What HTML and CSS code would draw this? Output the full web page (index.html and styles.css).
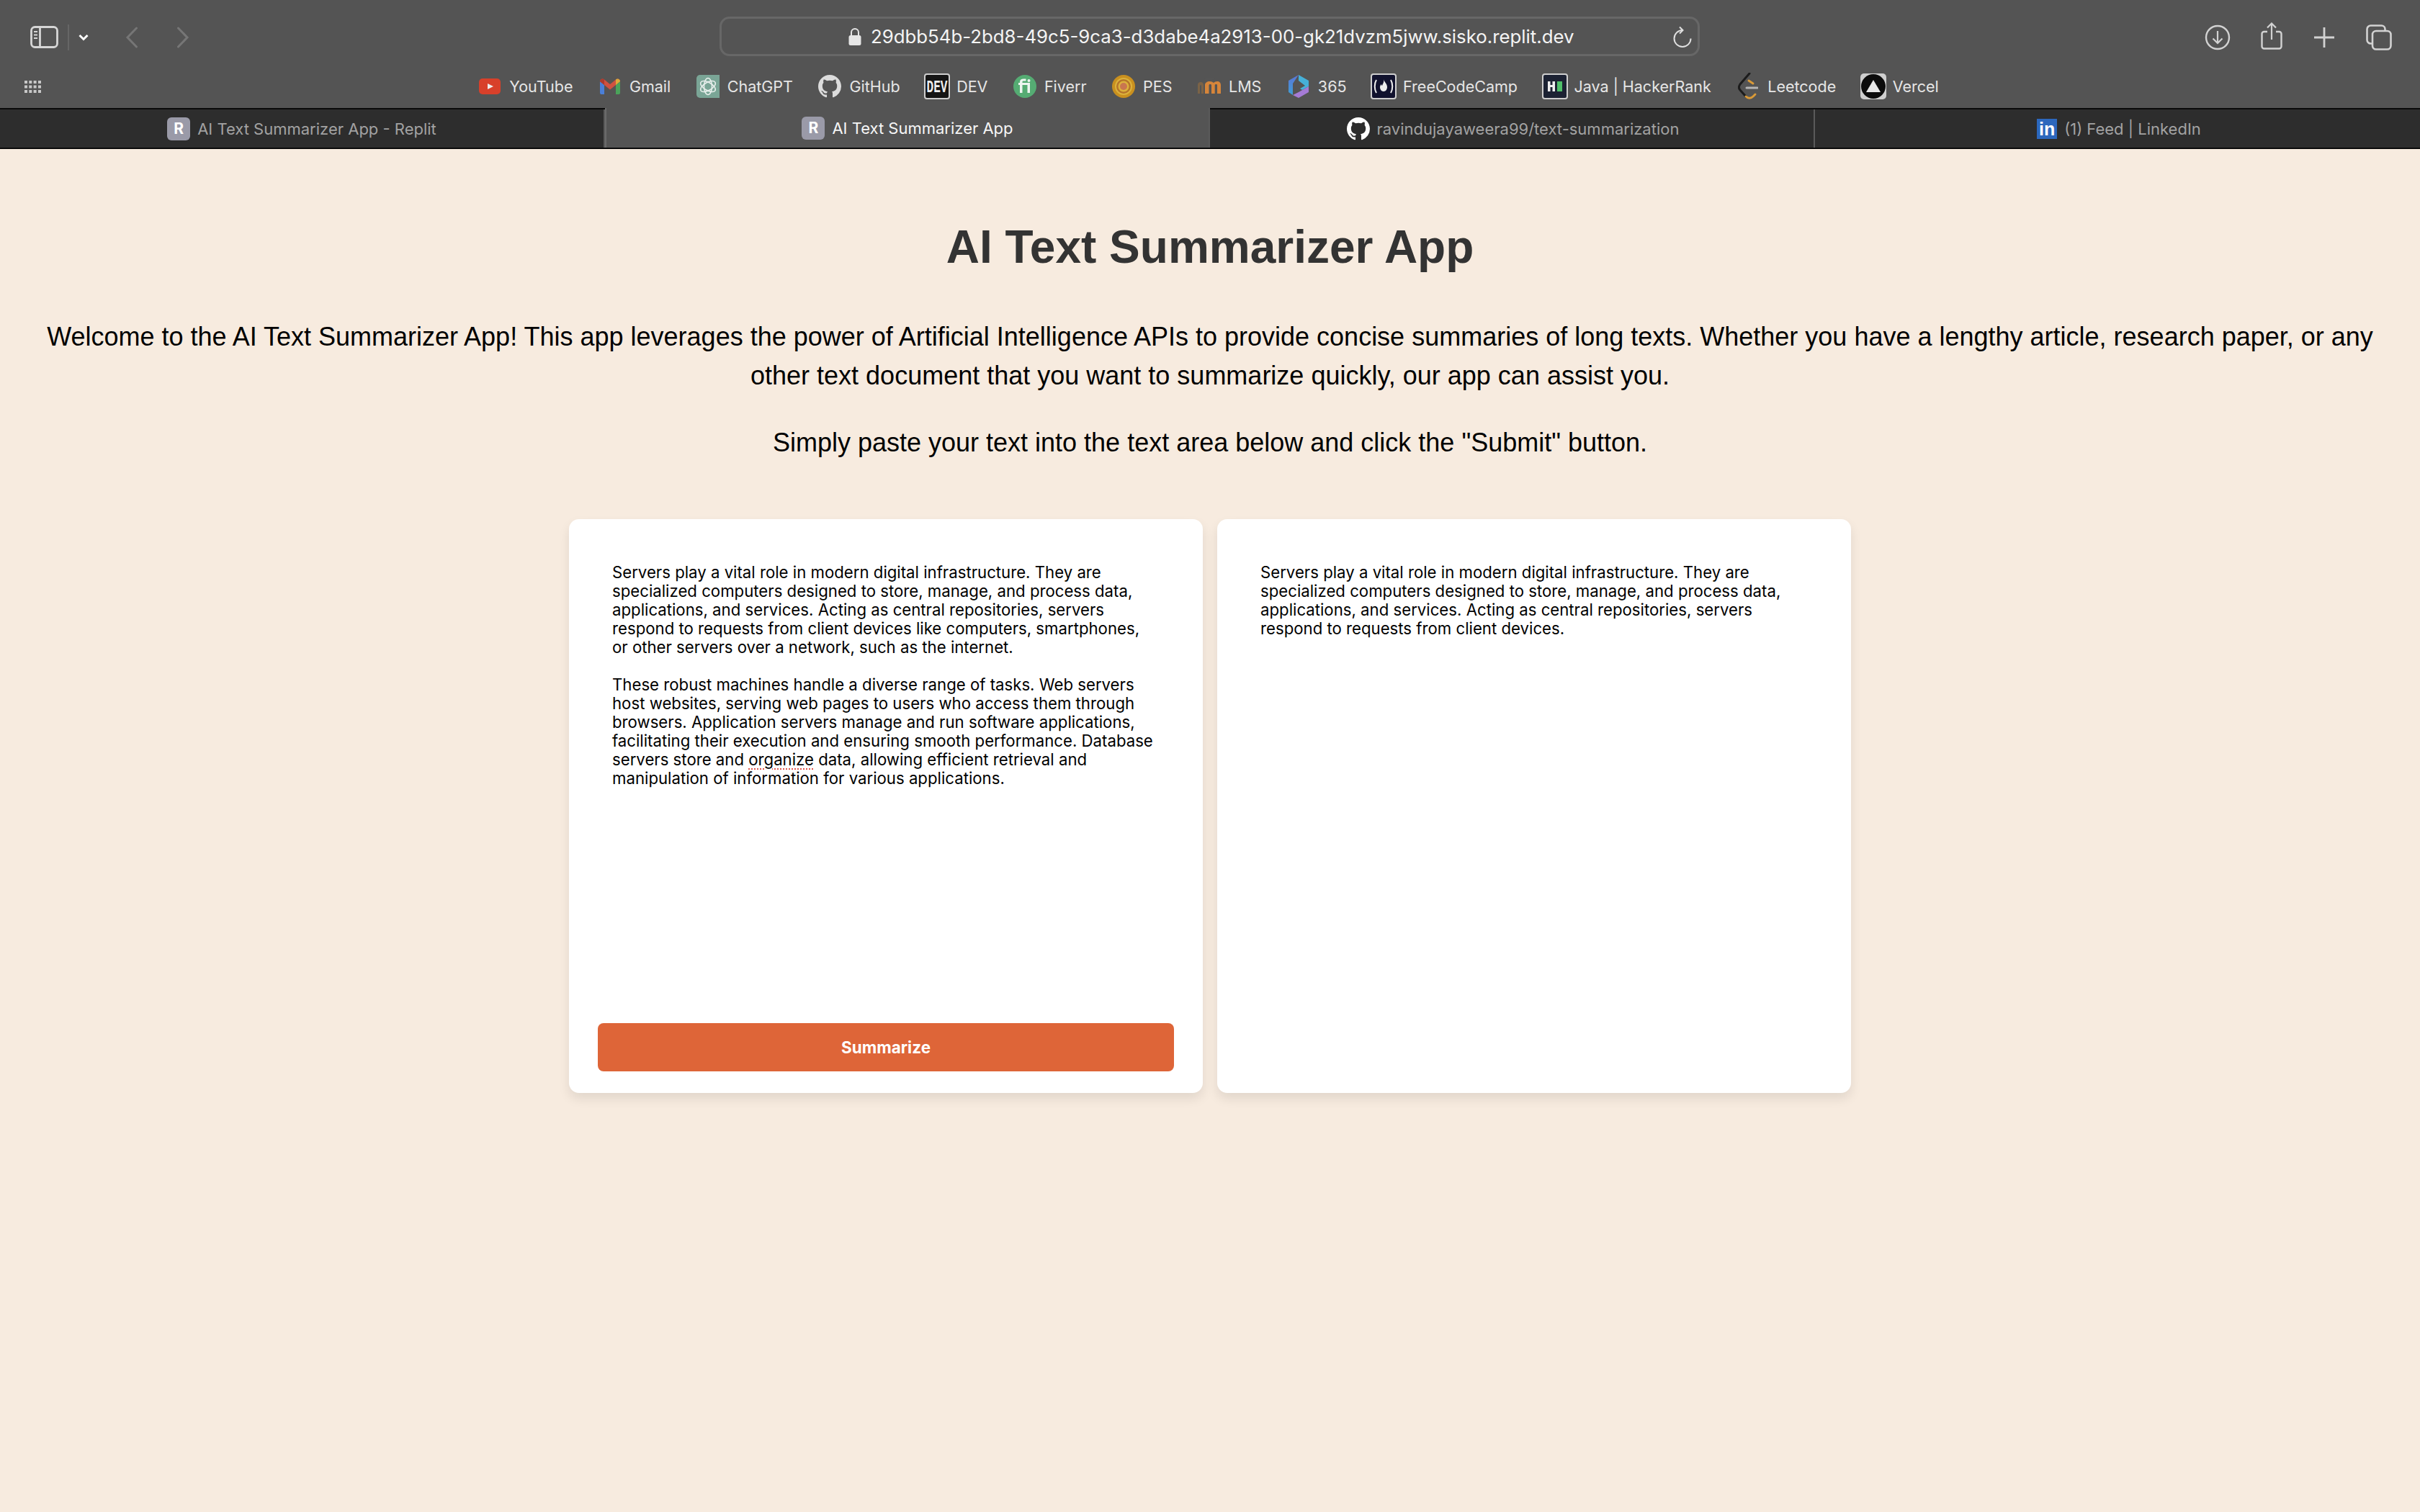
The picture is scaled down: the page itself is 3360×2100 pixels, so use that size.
FILE: index.html
```html
<!DOCTYPE html>
<html lang="en">
<head>
<meta charset="utf-8">
<title>AI Text Summarizer App</title>
<link rel="stylesheet" href="styles.css">
</head>
<body>
<header class="chrome">
  <div class="toolbar">
    <div class="tb-left">
      <svg class="i-side" viewBox="0 0 39 31"><rect x="1.500" y="1.500" width="36" height="28" rx="5" fill="none" stroke="#d6d6d6" stroke-width="2.800"/><path d="M13.500 2v27" stroke="#d6d6d6" stroke-width="2.800"/><path d="M5 8h5M5 12.500h5M5 17h5" stroke="#d6d6d6" stroke-width="1.800"/></svg>
      <span class="tb-sep"></span>
      <svg class="i-chev" viewBox="0 0 14 10"><path d="M1.500 2 7 7.500 12.500 2" fill="none" stroke="#fff" stroke-width="3"/></svg>
      <svg class="i-nav" viewBox="0 0 18 30"><path d="M15.500 2 3 15l12.500 13" fill="none" stroke="#767676" stroke-width="3" stroke-linecap="round"/></svg>
      <svg class="i-nav" viewBox="0 0 18 30"><path d="M2.500 2 15 15 2.500 28" fill="none" stroke="#767676" stroke-width="3" stroke-linecap="round"/></svg>
    </div>
    <div class="urlbar">
      <svg class="i-lock" viewBox="0 0 20 26"><path d="M5 12V7a5 5 0 0 1 10 0v5" fill="none" stroke="#e6e6e6" stroke-width="2"/><rect x="1.500" y="11" width="17" height="14" rx="2.500" fill="#e6e6e6"/></svg>
      <span class="url">29dbb54b-2bd8-49c5-9ca3-d3dabe4a2913-00-gk21dvzm5jww.sisko.replit.dev</span>
      <svg class="i-reload" viewBox="0 0 26 30"><path d="M13 6A11.500 11.500 0 1 0 24.500 17.500" fill="none" stroke="#e0e0e0" stroke-width="2"/><path d="M9 1.500 13.500 6 9 10.500" fill="none" stroke="#e0e0e0" stroke-width="2"/></svg>
    </div>
    <div class="tb-right">
      <svg class="i-dl" viewBox="0 0 36 36"><circle cx="18" cy="18" r="16" fill="none" stroke="#d2d2d2" stroke-width="2.400"/><path d="M18 9v17M11.500 19.500 18 26l6.500-6.500" fill="none" stroke="#d2d2d2" stroke-width="2.200"/></svg>
      <svg class="i-share" viewBox="0 0 30 38"><path d="M9 13H4.500A3 3 0 0 0 1.500 16v17.500a3 3 0 0 0 3 3h21a3 3 0 0 0 3-3V16a3 3 0 0 0-3-3H21" fill="none" stroke="#d2d2d2" stroke-width="2.400"/><path d="M15 24V2M9 7.500 15 1.500l6 6" fill="none" stroke="#d2d2d2" stroke-width="2.200"/></svg>
      <svg class="i-plus" viewBox="0 0 28 28"><path d="M14 0v28M0 14h28" stroke="#d2d2d2" stroke-width="2.800"/></svg>
      <svg class="i-tabs" viewBox="0 0 36 36"><rect x="1.500" y="1.500" width="25" height="25" rx="5" fill="none" stroke="#d2d2d2" stroke-width="2.600"/><rect x="9" y="9" width="25.500" height="25.500" rx="5" fill="#545454" stroke="#d2d2d2" stroke-width="2.600"/></svg>
    </div>
  </div>
  <div class="bookmarks">
    <svg class="i-grid" viewBox="0 0 23 17"><path d="M0 0h4v4H0zM6.300 0h4v4h-4zM12.600 0h4v4h-4zM19 0h4v4h-4zM0 6.500h4v4H0zM6.300 6.500h4v4h-4zM12.600 6.500h4v4h-4zM19 6.500h4v4h-4zM0 13h4v4H0zM6.300 13h4v4h-4zM12.600 13h4v4h-4zM19 13h4v4h-4z" fill="#c8c8c8"/></svg>
    <nav class="bm-list">
      <a class="bm"><svg class="ic-y" viewBox="0 0 30 22"><rect width="30" height="22" rx="5" fill="#d8402a"/><path d="M12 7l8 4-8 4z" fill="#eee"/></svg>YouTube</a>
      <a class="bm"><svg class="ic-g" viewBox="0 0 28 22"><path d="M0 4v16a2 2 0 0 0 2 2h4V9z" fill="#4a7fd8"/><path d="M28 4v16a2 2 0 0 1-2 2h-4V9z" fill="#4aa35a"/><path d="M0 4a3.500 3.500 0 0 1 6-2.500L14 8l8-6.500A3.500 3.500 0 0 1 28 4L22 9l-8 6.500L6 9z" fill="#cf5140"/><path d="M22 1.500A3.500 3.500 0 0 1 28 4L22 9z" fill="#dca93a"/><path d="M6 1.500A3.500 3.500 0 0 0 0 4l6 5z" fill="#ad3a2e"/></svg>Gmail</a>
      <a class="bm"><svg class="ic" viewBox="0 0 32 32"><path d="M5 0h27v32H5a5 5 0 0 1-5-5V5a5 5 0 0 1 5-5z" fill="#7aa596"/><g fill="none" stroke="#e8efec" stroke-width="1.500"><ellipse cx="16" cy="16" rx="5.500" ry="11.500"/><ellipse cx="16" cy="16" rx="5.500" ry="11.500" transform="rotate(60 16 16)"/><ellipse cx="16" cy="16" rx="5.500" ry="11.500" transform="rotate(120 16 16)"/></g></svg>ChatGPT</a>
      <a class="bm"><svg class="ic" viewBox="0 0 16 16"><path fill="#dcdcdc" d="M8 0C3.580 0 0 3.580 0 8c0 3.540 2.290 6.530 5.470 7.590.4.070.55-.17.550-.38 0-.19-.01-.82-.01-1.490-2.010.37-2.530-.49-2.690-.94-.09-.23-.48-.94-.82-1.130-.28-.15-.68-.52-.01-.53.630-.01 1.080.58 1.230.82.720 1.210 1.870.87 2.330.66.070-.52.280-.87.510-1.070-1.780-.2-3.640-.89-3.640-3.950 0-.87.310-1.590.820-2.150-.08-.2-.36-1.020.08-2.120 0 0 .67-.21 2.200.82.640-.18 1.320-.27 2-.27s1.360.09 2 .27c1.530-1.040 2.200-.82 2.200-.82.440 1.100.160 1.920.080 2.120.51.560.82 1.270.82 2.150 0 3.070-1.870 3.750-3.650 3.950.29.250.54.730.54 1.480 0 1.070-.01 1.930-.01 2.200 0 .21.150.46.550.38A8.010 8.010 0 0 0 16 8c0-4.420-3.580-8-8-8z"/></svg>GitHub</a>
      <a class="bm"><svg class="ic-box" viewBox="0 0 36 36"><rect x="1" y="1" width="34" height="34" rx="3" fill="#151515" stroke="#cfcfcf" stroke-width="2"/><text class="dev-mark" x="18" y="17.300" text-anchor="middle" textLength="29" lengthAdjust="spacingAndGlyphs" transform="scale(1 1.500)">DEV</text></svg>DEV</a>
      <a class="bm"><svg class="ic" viewBox="0 0 32 32"><circle cx="16" cy="16" r="16" fill="#55ac73"/><path d="M9 25V14H7v-3h2v-1.500C9 7 11 5.500 14 5.500h3.500v3H14c-1 0-1.500.5-1.500 1V11H23v14h-3.500V14h-7v11z" fill="#eef5f0"/><circle cx="21.500" cy="8" r="2" fill="#eef5f0"/></svg>Fiverr</a>
      <a class="bm"><svg class="ic" viewBox="0 0 32 32"><circle cx="16" cy="16" r="16" fill="#c9901f"/><circle cx="16" cy="16" r="11" fill="#b5752a" stroke="#dcb23c" stroke-width="2"/><circle cx="16" cy="16" r="7.500" fill="#dcb23c"/><circle cx="16" cy="16" r="5" fill="#c9764f"/></svg>PES</a>
      <a class="bm"><svg class="ic" viewBox="0 0 32 32"><path d="M0 26V14.500C0 11 2 10 4 10s4 1 4 4.500V26H5V14.500H3V26z" fill="#8c6a42" opacity=".7"/><path d="M10 26V14c0-3 3-5 6.500-5 2.500 0 4 .8 5.500 2 1.500-1.200 3-2 5-2 3 0 5 2 5 5v12h-5V14.500c0-1-.4-1.500-1.500-1.500-1.200 0-1.800.7-1.800 1.500V26h-4.700V14.500c0-1-.6-1.500-1.700-1.500-1.200 0-1.800.7-1.800 1.500V26z" fill="#d6853a"/><path d="M8 6l10-3 6 2-10 4z" fill="#555"/></svg>LMS</a>
      <a class="bm"><svg class="ic-m" viewBox="0 0 28 32"><defs><linearGradient id="m1" x1="0" y1="0" x2="0" y2="1"><stop offset="0" stop-color="#5a74d6"/><stop offset="1" stop-color="#3f9fd4"/></linearGradient></defs><path d="M14 0 28 8v8l-9 5-3-2 7-4-9-7z" fill="#46b0d8"/><path d="M14 0 0 8v16l6 4V12z" fill="url(#m1)"/><path d="M6 28l8 4 14-8v-8L14 24z" fill="#a57bd6"/></svg>365</a>
      <a class="bm"><svg class="ic-box" viewBox="0 0 36 36"><rect x="1" y="1" width="34" height="34" rx="3" fill="#11122e" stroke="#cfcfcf" stroke-width="2"/><path d="M8 9c-3 5-3 13 0 18M28 9c3 5 3 13 0 18" fill="none" stroke="#eee" stroke-width="2"/><path d="M18 8c1 4 5 6 5 11 0 3-2 6-5 6s-5-3-5-6c0-2 1-3 2-4 0 2 1 2 1 2 1-3 3-5 2-9z" fill="#eee"/></svg>FreeCodeCamp</a>
      <a class="bm"><svg class="ic-box" viewBox="0 0 36 36"><rect x="1" y="1" width="34" height="34" rx="3" fill="#1c2233" stroke="#cfcfcf" stroke-width="2"/><path d="M8 11h3.500v5h3v-5H18v14h-3.500v-6h-3v6H8z" fill="#eee"/><rect x="21" y="11" width="7" height="14" fill="#4fc06a"/></svg>Java | HackerRank</a>
      <a class="bm"><svg class="ic-l" viewBox="0 0 28 38"><path d="M16 1 3 16c-2 3-2 6 0 8l8 9" fill="none" stroke="#1c1c1c" stroke-width="3" stroke-linecap="round"/><path d="M15 11l6 4M11 33c3 3 7 3 10 0l3-3" fill="none" stroke="#d99a38" stroke-width="3" stroke-linecap="round"/><path d="M12 21h15" stroke="#b5b5b5" stroke-width="3" stroke-linecap="round"/></svg>Leetcode</a>
      <a class="bm"><svg class="ic-box" viewBox="0 0 36 36"><rect width="36" height="36" rx="5" fill="#cfcfcf"/><circle cx="18" cy="18" r="17" fill="#0c0c0c"/><path d="M18 9l10 17H8z" fill="#e8e8e8"/></svg>Vercel</a>
    </nav>
  </div>
  <div class="tabs">
    <div class="tab"><span class="fav-r">R</span><span>AI Text Summarizer App - Replit</span></div>
    <div class="tab tab-active"><span class="fav-r">R</span><span>AI Text Summarizer App</span></div>
    <div class="tab tab-gh"><svg class="ic" viewBox="0 0 16 16"><path fill="#fff" d="M8 0C3.580 0 0 3.580 0 8c0 3.540 2.290 6.530 5.470 7.590.4.070.55-.17.550-.38 0-.19-.01-.82-.01-1.490-2.010.37-2.530-.49-2.690-.94-.09-.23-.48-.94-.82-1.130-.28-.15-.68-.52-.01-.53.630-.01 1.080.58 1.230.82.720 1.210 1.870.87 2.330.66.070-.52.280-.87.510-1.070-1.780-.2-3.640-.89-3.640-3.950 0-.87.310-1.590.820-2.150-.08-.2-.36-1.020.08-2.120 0 0 .67-.21 2.200.82.640-.18 1.320-.27 2-.27s1.360.09 2 .27c1.530-1.040 2.200-.82 2.200-.82.440 1.100.160 1.920.080 2.120.51.560.82 1.270.82 2.150 0 3.070-1.870 3.750-3.650 3.950.29.250.54.730.54 1.480 0 1.070-.01 1.930-.01 2.200 0 .21.150.46.550.38A8.010 8.010 0 0 0 16 8c0-4.420-3.580-8-8-8z"/></svg><span>ravindujayaweera99/text-summarization</span></div>
    <div class="tab tab-in"><span class="fav-in">in</span><span>(1) Feed | LinkedIn</span></div>
  </div>
</header>
<main class="page">
  <h1 class="title">AI Text Summarizer App</h1>
  <p class="lead">Welcome to the AI Text Summarizer App! This app leverages the power of Artificial Intelligence APIs to provide concise summaries of long texts. Whether you have a lengthy article, research paper, or any other text document that you want to summarize quickly, our app can assist you.</p>
  <p class="lead lead-2">Simply paste your text into the text area below and click the "Submit" button.</p>
  <section class="cards">
    <div class="card">
      <div class="text">
        <p>Servers play a vital role in modern digital infrastructure. They are specialized computers designed to store, manage, and process data, applications, and services. Acting as central repositories, servers respond to requests from client devices like computers, smartphones, or other servers over a network, such as the internet.</p>
        <p>These robust machines handle a diverse range of tasks. Web servers host websites, serving web pages to users who access them through browsers. Application servers manage and run software applications, facilitating their execution and ensuring smooth performance. Database servers store and <span class="spell">organize</span> data, allowing efficient retrieval and manipulation of information for various applications.</p>
      </div>
      <button class="submit">Summarize</button>
    </div>
    <div class="card">
      <div class="text">
        <p>Servers play a vital role in modern digital infrastructure. They are specialized computers designed to store, manage, and process data, applications, and services. Acting as central repositories, servers respond to requests from client devices.</p>
      </div>
    </div>
  </section>
</main>
</body>
</html>
```
FILE: styles.css
```css
* { box-sizing: border-box; }
html, body { margin: 0; height: 100%; }
body { background: #f7ebdf; color: #000; font-family: "Liberation Sans", Arial, sans-serif; display: flex; flex-direction: column; min-height: 2100px; }
svg { display: block; flex: none; }

.chrome { background: #545454; font-family: Inter, sans-serif; flex: none; }
.toolbar { height: 100px; display: grid; grid-template-columns: 999px 1361px 1fr; align-items: center; padding-top: 3px; }
.tb-left { display: flex; align-items: center; padding-left: 42px; }
.i-side { width: 39px; height: 31px; }
.tb-sep { width: 2px; height: 36px; background: #666; margin-left: 13px; }
.i-chev { width: 14px; height: 10px; margin-left: 13px; }
.i-nav { width: 18px; height: 30px; }
.i-chev + .i-nav { margin-left: 51px; }
.i-nav + .i-nav { margin-left: 53px; }
.urlbar { height: 55px; border: 3px solid #676767; border-radius: 14px; display: flex; align-items: center; padding-left: 175px; position: relative; top: -1px; }
.i-lock { width: 20px; height: 26px; }
.url { color: #f4f4f4; font-size: 25.800px; margin-left: 12px; white-space: nowrap; }
.i-reload { width: 26px; height: 30px; margin-left: auto; margin-right: 8px; }
.tb-right { display: flex; align-items: center; justify-content: flex-end; padding-right: 39px; }
.i-dl { width: 36px; height: 36px; }
.i-share { width: 30px; height: 38px; margin-left: 42px; margin-top: -3px; }
.i-plus { width: 28px; height: 28px; margin-left: 44px; }
.i-tabs { width: 36px; height: 36px; margin-left: 44px; }

.bookmarks { height: 50px; display: flex; align-items: center; justify-content: center; position: relative; }
.i-grid { width: 23px; height: 17px; position: absolute; left: 34px; top: 12px; }
.bm-list { display: flex; align-items: center; gap: 35.500px; position: relative; top: -5px; left: -2px; }
.bm { display: flex; align-items: center; gap: 11px; color: #e6e6e6; font-size: 21.500px; white-space: nowrap; }
.ic { width: 32px; height: 32px; }
.ic-y { width: 30px; height: 22px; margin: 0 1px; }
.ic-g { width: 28px; height: 22px; margin: 0 2px; }
.ic-m { width: 28px; height: 32px; margin: 0 2px; }
.ic-l { width: 28px; height: 38px; margin: 0 2px; }
.ic-box { width: 36px; height: 36px; margin: 0 -2px; }
.dev-mark { font: 700 16px "Liberation Mono", monospace; fill: #eee; }

.tabs { height: 57px; display: grid; grid-template-columns: repeat(4, 1fr); background: #2d2d2d; border-top: 2px solid #0a0a0a; border-bottom: 2px solid #0a0a0a; }
.tab { display: flex; align-items: center; justify-content: center; gap: 10px; color: #a2a2a2; font-size: 22px; white-space: nowrap; border-right: 2px solid #5a5a5a; }
.tab:last-child { border-right: 0; }
.tab-active { background: #545454; color: #f6f6f6; margin-top: -2px; border-right: 2px solid #5a5a5a; border-left: 2px solid #6a6a6a; }
.tab-gh { padding-left: 3px; }
.tab-in { padding-left: 4px; }
.fav-r { width: 32px; height: 32px; border-radius: 6px; background: #9a9aa8; color: #fff; font-weight: 700; font-size: 21px; line-height: 32px; text-align: center; }
.fav-in { width: 28px; height: 28px; background: #2c67bd; color: #fff; font: 700 25px/28px "Liberation Sans", sans-serif; text-align: center; }

.page { flex: 1; padding: 0 60px; }
.title { margin: 0; padding-top: 97px; font-size: 64px; line-height: 78px; font-weight: 700; color: #333; text-align: center; }
.lead { margin: 59px 0 0; font-size: 36px; line-height: 54px; text-align: center; }
.lead-2 { margin-top: 39px; }
.cards { display: flex; justify-content: center; gap: 20px; margin-top: 79px; }
.card { width: 880px; height: 797px; background: #fff; border-radius: 14px; box-shadow: 0 8px 16px rgba(0,0,0,.09); padding: 0 40px 30px; display: flex; flex-direction: column; font-family: Inter, sans-serif; }
.text { flex: 1; padding: 61px 25px 0 20px; font-size: 22.200px; line-height: 26px; }
.text p { margin: 0 0 26px; }
.spell { display: inline-block; line-height: 26px; text-decoration: underline dotted #e0544a 2px; text-underline-offset: 4px; }
.submit { height: 67px; width: 100%; border: 0; border-radius: 8px; background: #de6538; color: #fff; font: 700 22.500px Inter, sans-serif; }
```
